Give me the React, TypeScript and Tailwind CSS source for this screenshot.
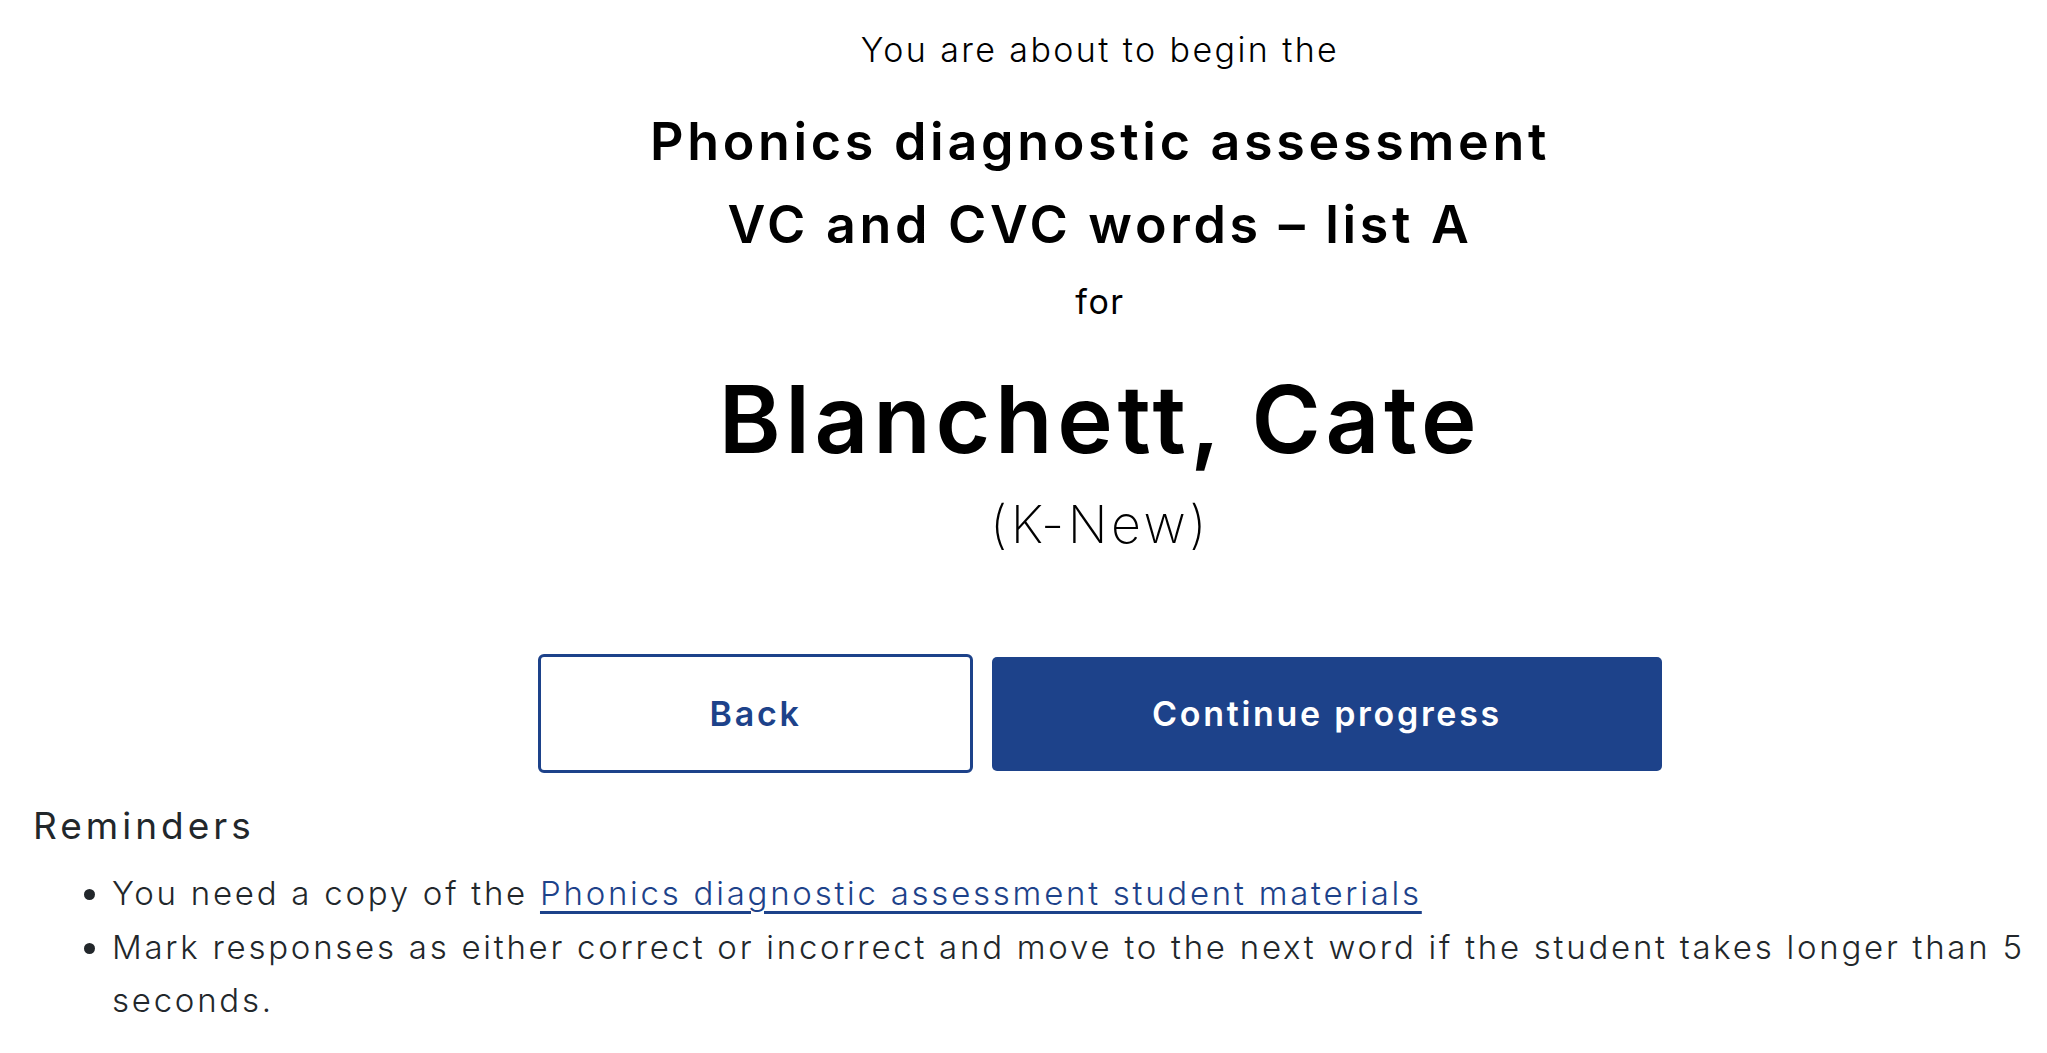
import React from "react";

export default function App() {
  return (
    <div className="w-full bg-white font-['Inter',sans-serif] text-black">
      <div className="pl-[153px] flex flex-col items-center text-center">
        <p className="pt-[28px] text-[34px] leading-[44px] font-light tracking-[2.4px]">You are about to begin the</p>
        <h1 className="mt-[28px] text-[52px] leading-[83px] font-semibold tracking-[3.7px]">
          <span className="block">Phonics diagnostic assessment</span>
          <span className="block">VC and CVC words – list A</span>
        </h1>
        <p className="mt-[14px] text-[34px] leading-[44px] font-normal tracking-[1.5px]">for</p>
        <h2 className="mt-[40px] text-[94px] leading-[110px] font-semibold tracking-[4.7px]">Blanchett, Cate</h2>
        <p className="mt-[21px] text-[52px] leading-[60px] font-extralight tracking-[3.5px]">(K-New)</p>
        <div className="mt-[99px] flex items-center gap-[19px]">
          <button className="w-[435px] h-[119px] rounded-[6px] border-[3px] border-[#1d428a] bg-white text-[#1d428a] text-[34px] font-semibold tracking-[2.7px]">
            Back
          </button>
          <button className="w-[670px] h-[114px] rounded-[5px] bg-[#1d428a] text-white text-[34px] font-semibold tracking-[2.7px]">
            Continue progress
          </button>
        </div>
      </div>
      <div className="pl-[33px] pr-[6px] pb-[20px] text-[#22272b]">
        <h3 className="mt-[29px] text-[37px] leading-[48px] font-normal tracking-[4px]">Reminders</h3>
        <ul className="mt-[17px] list-disc pl-[79px] text-[33px] leading-[53.5px] font-light tracking-[2.75px]">
          <li>
            You need a copy of the{" "}
            <a href="#" className="text-[#1d428a] underline decoration-[3px] underline-offset-[6px]">
              Phonics diagnostic assessment student materials
            </a>
          </li>
          <li>
            Mark responses as either correct or incorrect and move to the next word if the student takes longer than 5
            seconds.
          </li>
        </ul>
      </div>
    </div>
  );
}
